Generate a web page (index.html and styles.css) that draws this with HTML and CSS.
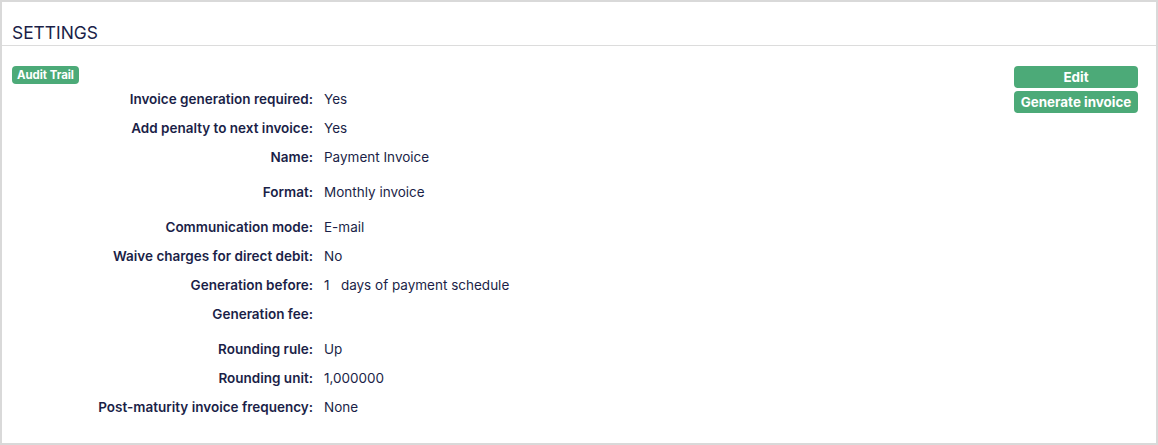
FILE: index.html
```html
<!DOCTYPE html>
<html>
<head>
<meta charset="utf-8">
<link rel="stylesheet" href="styles.css">
</head>
<body>
<div class="panel">
  <div class="panel-header">SETTINGS</div>
  <div class="panel-body">
    <div class="main">
      <span class="badge">Audit Trail</span>
      <div class="fields">
        <div class="row"><div class="label">Invoice generation required:</div><div class="value">Yes</div></div>
        <div class="row"><div class="label">Add penalty to next invoice:</div><div class="value">Yes</div></div>
        <div class="row tall"><div class="label">Name:</div><div class="value">Payment Invoice</div></div>
        <div class="row tall"><div class="label">Format:</div><div class="value">Monthly invoice</div></div>
        <div class="row"><div class="label">Communication mode:</div><div class="value">E-mail</div></div>
        <div class="row"><div class="label">Waive charges for direct debit:</div><div class="value">No</div></div>
        <div class="row"><div class="label">Generation before:</div><div class="value">1&nbsp;&nbsp; days of payment schedule</div></div>
        <div class="row tall"><div class="label">Generation fee:</div><div class="value"></div></div>
        <div class="row"><div class="label">Rounding rule:</div><div class="value">Up</div></div>
        <div class="row"><div class="label">Rounding unit:</div><div class="value">1,000000</div></div>
        <div class="row"><div class="label">Post-maturity invoice frequency:</div><div class="value">None</div></div>
      </div>
    </div>
    <div class="actions">
      <button class="btn">Edit</button>
      <button class="btn">Generate invoice</button>
    </div>
  </div>
</div>
</body>
</html>
```

FILE: styles.css
```css
html, body {
  margin: 0;
  padding: 0;
  background: #ffffff;
}
body {
  font-family: Inter, "Noto Sans", sans-serif;
  color: #1b1f48;
}
.panel {
  box-sizing: border-box;
  width: 1158px;
  height: 445px;
  border: 2px solid #d9d9d9;
  background: #fff;
}
.panel-header {
  height: 44px;
  box-sizing: border-box;
  padding: 19px 0 0 10px;
  font-size: 17.4px;
  line-height: 24px;
  border-bottom: 1px solid #dcdcdc;
  color: #1b1f48;
}
.panel-body {
  display: flex;
  justify-content: space-between;
  padding: 20px 18px 0 10px;
}
.main {
  display: flex;
  flex-direction: column;
  align-items: flex-start;
}
.badge {
  display: inline-block;
  background: #4caa78;
  color: #fff;
  font-size: 11.4px;
  font-weight: 700;
  line-height: 18px;
  height: 18px;
  padding: 0 5px;
  border-radius: 4px;
}
.fields {
  display: flex;
  flex-direction: column;
  padding-top: 1px;
}
.row {
  display: flex;
  height: 29px;
  font-size: 13.5px;
  line-height: 29px;
}
.row.tall {
  height: 35px;
}
.label {
  width: 301px;
  text-align: right;
  font-weight: 600;
}
.value {
  padding-left: 11px;
  font-weight: 400;
}
.actions {
  display: flex;
  flex-direction: column;
  gap: 3px;
  width: 124px;
}
.btn {
  font-family: Inter, "Noto Sans", sans-serif;
  background: #4caa78;
  color: #fff;
  border: none;
  border-radius: 4px;
  height: 22px;
  padding: 0;
  font-size: 13.4px;
  font-weight: 700;
  line-height: 22px;
  cursor: pointer;
}
```
